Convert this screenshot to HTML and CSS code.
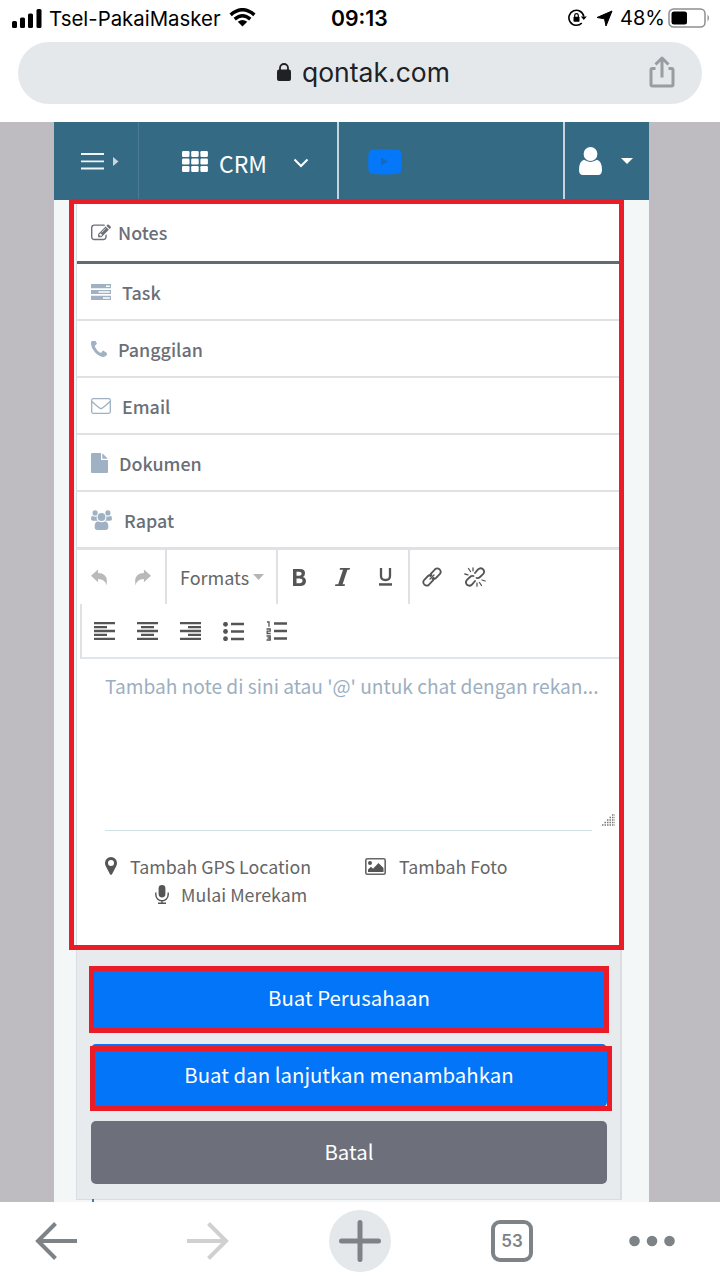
FILE: index.html
```html
<!DOCTYPE html>
<html lang="id">
<head>
<meta charset="utf-8">
<title>Qontak CRM</title>
<link rel="stylesheet" href="styles.css">
</head>
<body>
<div class="screen">
  <header class="browser-top">
    <div class="status">
      <div class="status-left">
        <svg width="30" height="19" viewBox="0 0 30 19"><rect x="0" y="12" width="5" height="7" rx="1.5"/><rect x="8" y="8.500" width="5" height="10.500" rx="1.500"/><rect x="16" y="4.500" width="5" height="14.500" rx="1.500"/><rect x="24.500" y="0" width="5" height="19" rx="1.500"/></svg>
        <span class="carrier">Tsel-PakaiMasker</span>
        <svg class="wifi" width="27" height="19" viewBox="0 0 28 20"><g fill="none" stroke="#000" stroke-width="3.600"><path d="M1.500 7.200Q14-3.600 26.500 7.200"/><path d="M5.800 11.700Q14 4.600 22.200 11.700"/></g><path d="M9 14.500Q14 10.500 19 14.500L14 19.500z"/></svg>
      </div>
      <span class="clock">09:13</span>
      <div class="status-right">
        <svg width="20" height="18" viewBox="0 0 20 18"><path d="M13.800 14A7.500 7.500 0 1 1 15.800 7.500" fill="none" stroke="#000" stroke-width="1.600"/><path d="M12.800 7.500h6L15.800 11z"/><rect x="5.500" y="7.700" width="6" height="5" rx=".7"/><path d="M6.700 8V6.500a1.800 1.800 0 0 1 3.600 0V8" fill="none" stroke="#000" stroke-width="1.200"/></svg>
        <svg class="nav-arrow" width="17" height="17" viewBox="0 0 17 17"><path d="M16 1L10 16 8.500 8.800 1 7.500z" stroke="#000" stroke-linejoin="round"/></svg>
        <span class="percent">48%</span>
        <svg class="battery" width="42" height="20" viewBox="0 0 42 20"><rect x="1" y="1" width="36" height="18" rx="4.500" fill="#fff" stroke="#8f8f8f" stroke-width="1.500"/><rect x="3.500" y="3.500" width="15.500" height="13" rx="2.500"/><path d="M39.500 6.500q3 3.500 0 7z" fill="#8f8f8f"/></svg>
      </div>
    </div>
    <div class="address">
      <svg class="lock" width="14" height="18" viewBox="0 0 14 18"><rect y="6.500" width="14" height="11.500" rx="2" fill="#202124"/><path d="M3 8V5a4 4 0 0 1 8 0v3" fill="none" stroke="#202124" stroke-width="1.800"/></svg>
      <span class="host">qontak.com</span>
      <svg class="share" width="26" height="32" viewBox="0 0 26 32" fill="none" stroke="#999ca0" stroke-width="3" stroke-linejoin="round"><path d="M6.500 12.500H3.500Q2 12.500 2 14v14.500Q2 30 3.500 30h19q1.500 0 1.500-1.500V14q0-1.500-1.500-1.500h-3M13 21.500V3M6.500 8.500L13 2l6.500 6.500"/></svg>
    </div>
  </header>

  <main class="viewport">
    <div class="app">
      <nav class="topbar">
        <div class="top-cell menu">
          <svg width="38" height="18" viewBox="0 0 38 18"><path d="M0 2h23M0 9.300h23M0 16.500h23" stroke="#eef4f7" stroke-width="1.800"/><path d="M32 5l5.500 4.500L32 14z" fill="#c9d6de"/></svg>
        </div>
        <div class="top-cell product">
          <svg width="26" height="21" viewBox="0 0 26 21" fill="#fff"><rect width="7.500" height="6" rx="1.200"/><rect x="9.200" width="7.500" height="6" rx="1.200"/><rect x="18.400" width="7.500" height="6" rx="1.200"/><rect y="7.500" width="7.500" height="6" rx="1.200"/><rect x="9.200" y="7.500" width="7.500" height="6" rx="1.200"/><rect x="18.400" y="7.500" width="7.500" height="6" rx="1.200"/><rect y="15" width="7.500" height="6" rx="1.200"/><rect x="9.200" y="15" width="7.500" height="6" rx="1.200"/><rect x="18.400" y="15" width="7.500" height="6" rx="1.200"/></svg>
          <span class="crm">CRM</span>
          <svg class="chevron" width="16" height="10" viewBox="0 0 16 10"><path d="M1.500 1.500L8 8l6.500-6.500" fill="none" stroke="#fff" stroke-width="2"/></svg>
        </div>
        <div class="top-cell video">
          <svg width="34" height="26" viewBox="0 0 34 26"><path d="M4 .8Q17-.5 30 .8q3 .5 3.400 4 .8 8 0 16-.4 3.400-3.400 4-13 1.200-26 0-3-.6-3.400-4-.8-8 0-16Q1 1.300 4 .8z" fill="#0478f8"/><path d="M13 8.500l7.500 4-7.500 4z" fill="#1769bd"/></svg>
        </div>
        <div class="top-cell user">
          <svg width="23" height="28" viewBox="0 0 23 28" fill="#fff"><circle cx="11.500" cy="7" r="6.900"/><path d="M5 12.800Q11.500 17 18 12.800q5 1.500 5 10.200 0 5-4 5H4q-4 0-4-5 0-8.700 5-10.200z"/></svg>
          <svg class="caret" width="12" height="6" viewBox="0 0 12 6"><path d="M0 0h12L6 6z" fill="#fff"/></svg>
        </div>
      </nav>

      <section class="card">
        <div class="tab active">
          <svg width="20" height="20" viewBox="0 0 1792 1792" fill="#6c707a"><path d="M888 1184l116-116-152-152-116 116v56h96v96h56zm440-720q-16-16-33 1l-350 350q-17 17-1 33t33-1l350-350q17-17 1-33zm80 594v190q0 119-84.500 203.500t-203.500 84.500h-832q-119 0-203.500-84.500t-84.500-203.500v-832q0-119 84.500-203.500t203.500-84.500h832q63 0 117 25 15 7 18 23 3 17-9 29l-49 49q-14 14-32 8-23-6-45-6h-832q-66 0-113 47t-47 113v832q0 66 47 113t113 47h832q66 0 113-47t47-113v-126q0-13 9-22l64-64q15-15 35-7t20 29zm-96-738l288 288-672 672h-288v-288zm444 132l-92 92-288-288 92-92q28-28 68-28t68 28l152 152q28 28 28 68t-28 68z"/></svg>
          <span>Notes</span>
        </div>
        <div class="tab">
          <svg width="20" height="16" viewBox="0 0 20 16"><path d="M0 0h20v4.200H0zM0 5.900h20v4.200H0zM0 11.800h20V16H0z" fill="#9fb1c2"/><path d="M15 1.400h3.800v1.500H15zM7.500 7.300h11.300v1.500H7.500zM12 13.200h6.800v1.500H12z" fill="#fff"/></svg>
          <span>Task</span>
        </div>
        <div class="tab">
          <svg width="16" height="16" viewBox="192 256 1408 1280" preserveAspectRatio="none" fill="#9fb1c2"><path d="M1600 1240q0 27-10 70.500t-21 68.500q-21 50-122 106-94 51-186 51-27 0-53-3.500t-57.500-12.500-47-14.500-55.500-20.500-49-18q-98-35-175-83-127-79-264-216t-216-264q-48-77-83-175-3-9-18-49t-20.500-55.500-14.500-47-12.500-57.500-3.500-53q0-92 51-186 56-101 106-122 25-11 68.500-21t70.500-10q14 0 21 3 18 6 53 76 11 19 30 54t35 63.500 31 53.500q3 4 17.500 25t21.500 35.500 7 28.500q0 20-28.500 50t-62 55-62 53-28.500 46q0 9 5 22.500t8.500 20.500 14 24 11.500 19q76 137 174 235t235 174q2 1 19 11.500t24 14 20.500 8.500 22.500 5q18 0 46-28.500t53-62 55-62 50-28.500q14 0 28.500 7t35.500 21.500 25 17.500q25 15 53.500 31t63.500 35 54 30q70 35 76 53 3 7 3 21z"/></svg>
          <span>Panggilan</span>
        </div>
        <div class="tab">
          <svg width="20" height="16" viewBox="0 0 20 16" fill="none" stroke="#9fb1c2" stroke-width="1.300"><rect x=".7" y=".7" width="18.600" height="14.600" rx="1.500"/><path d="M.9 3.500q4 3.700 7.300 6.300 1.800 1.400 3.600 0 3.300-2.600 7.300-6.300"/></svg>
          <span>Email</span>
        </div>
        <div class="tab">
          <svg width="17" height="20" viewBox="0 0 17 20" fill="#9fb1c2"><path d="M1 0h9v7h7v12q0 1-1 1H1q-1 0-1-1V1q0-1 1-1z"/><path d="M11.300.2l5.500 5.500h-5.500z"/></svg>
          <span>Dokumen</span>
        </div>
        <div class="tab last">
          <svg width="21" height="20" viewBox="0 0 22 20" preserveAspectRatio="none" fill="#9fb1c2"><circle cx="4.300" cy="2.900" r="2.700"/><circle cx="17.700" cy="2.900" r="2.700"/><path d="M1.500 5.800q2.500 1.500 4.500.4-.6 2.600 1 4.600H2q-2 0-2-1.700 0-3 1.500-3.300zM20.500 5.800q-2.500 1.500-4.500.4.600 2.600-1 4.600h5q2 0 2-1.700 0-3-1.500-3.300z"/><circle cx="11" cy="7" r="4.900" fill="#fff"/><circle cx="11" cy="7" r="4.100"/><path d="M7 11.200q4 2 8 0 3.200.8 3.200 5.600 0 3.200-3 3.200H6.800q-3 0-3-3.200 0-4.800 3.200-5.600z"/></svg>
          <span>Rapat</span>
        </div>

        <div class="tools">
          <div class="tool-group history">
            <svg width="17" height="17" viewBox="0 0 18 17"><path d="M0 6.700L7.500 0v3.800Q19 4 16.300 17 15.200 10 7.500 10v3.500z" fill="#b9b9b9"/></svg>
            <svg width="17" height="17" viewBox="0 0 18 17"><path d="M18 6.700L10.500 0v3.800Q-1 4 1.700 17 2.800 10 10.500 10v3.500z" fill="#b9b9b9"/></svg>
          </div>
          <div class="tool-group formats"><span>Formats</span><svg width="11" height="6" viewBox="0 0 11 6"><path d="M0 0h11L5.500 6z" fill="#b5b5b5"/></svg></div>
          <div class="tool-group inline">
            <svg width="13" height="17" viewBox="0 0 13 17"><path fill-rule="evenodd" d="M0 0h7q5 0 5 4.200 0 2.800-2.200 3.700Q13 8.800 13 12q0 5-6 5H0zM3.500 2.800v4H6q2.700 0 2.700-2T6 2.800zM3.500 9.400v4.800h3q3 0 3-2.400t-3-2.400z" fill="#555"/></svg>
            <svg width="15" height="18" viewBox="0 0 15 18"><path d="M5 0h10l-.4 1.700h-2.200L7.600 16.300h2.400L9.600 18H0l.4-1.700h2.800L8 1.700H4.600z" fill="#555"/></svg>
            <svg width="13" height="18" viewBox="0 0 13 18"><path d="M2 0v8q0 4 4.500 4T11 8V0" fill="none" stroke="#555" stroke-width="2.300"/><path d="M0 15.200h13v2.500H0z" fill="#555"/></svg>
          </div>
          <div class="tool-group links">
            <svg width="20" height="20" viewBox="0 0 20 20" fill="none" stroke="#555" stroke-width="1.800" stroke-linecap="round"><path d="M8.500 9.200Q8 7.500 9.500 6L13 2.300q2.300-2 4.700.2 2.100 2.400 0 4.700L14 11q-1.800 1.500-3.500.8M11.500 10.800q.5 1.700-1 3.200L7 17.700q-2.300 2-4.700-.2-2.100-2.400 0-4.700L6 9q1.800-1.500 3.500-.8"/><path d="M8 12l4-4" stroke-width="1.200"/></svg>
            <svg width="22" height="20" viewBox="0 0 22 20" fill="none" stroke="#555" stroke-width="1.800" stroke-linecap="round"><path d="M11 6l3-3.500q2.500-2.300 5-.3 2.200 2.500 0 5L16 10q-1.500 1.500-3.500 1M11 14l-3 3.500q-2.500 2.300-5 .3-2.200-2.500 0-5L6 10Q7.500 8.500 9.500 9"/><path stroke-width="1.300" d="M4.500 1.500l2 3M9 .8v3M.8 7l3.200.8M17.500 18.500l-2-3M13 19.200v-3M21.200 14l-3.200-1"/></svg>
          </div>
        </div>
        <div class="tools second">
          <svg width="21" height="18" viewBox="0 0 21 18" stroke="#555" stroke-width="2.300"><path d="M0 1.200h21M0 5.100h13M0 9h21M0 12.900h13M0 16.800h21"/></svg>
          <svg width="21" height="18" viewBox="0 0 21 18" stroke="#555" stroke-width="2.300"><path d="M0 1.200h21M4 5.100h13M0 9h21M4 12.900h13M0 16.800h21"/></svg>
          <svg width="21" height="18" viewBox="0 0 21 18" stroke="#555" stroke-width="2.300"><path d="M0 1.200h21M8 5.100h13M0 9h21M8 12.900h13M0 16.800h21"/></svg>
          <svg width="21" height="19" viewBox="0 0 21 19"><path d="M8 2h13M8 9.500h13M8 17h13" stroke="#555" stroke-width="2.300"/><g fill="#555"><circle cx="2.500" cy="2.300" r="2.400"/><circle cx="2.500" cy="9.500" r="2.400"/><circle cx="2.500" cy="16.700" r="2.400"/></g></svg>
          <svg width="21" height="20" viewBox="0 0 21 20" fill="none" stroke="#555"><path d="M8 2.500h13M8 10h13M8 17.500h13" stroke-width="2.300"/><path d="M1 1h2v4.800M.5 8h3.700v2.200H1.200v2.300h3.500M.5 15h3.700v4H.5M1.500 17h2.500" stroke-width="1.300"/></svg>
        </div>

        <div class="editor">
          <div class="note-area"><span class="placeholder">Tambah note di sini atau '@' untuk chat dengan rekan...</span></div>
          <svg class="grip" width="13" height="13" viewBox="0 0 13 13" stroke="#777" stroke-width="1.400" stroke-dasharray="1.500 1"><path d="M0 12h13M2.500 9.500H13M5 7h8M7.500 4.500H13M10 2h3"/></svg>
          <div class="actions">
            <div class="action-row">
              <svg width="12" height="18" viewBox="0 0 12 18"><path fill-rule="evenodd" d="M6 0a6 6 0 0 1 6 6q0 1.500-.7 3L7 17.200q-1 1.300-2 0L.7 9Q0 7.500 0 6a6 6 0 0 1 6-6zm0 3a3 3 0 1 0 0 6 3 3 0 0 0 0-6z" fill="#555"/></svg>
              <span class="gps">Tambah GPS Location</span>
              <svg class="photo" width="21" height="17" viewBox="0 0 21 17"><rect x=".8" y=".8" width="19.400" height="15.400" rx="1.500" fill="none" stroke="#666" stroke-width="1.600"/><circle cx="5" cy="5" r="2" fill="#555"/><path d="M3 14v-2.500L6 8.800l2 2L13.500 5l5 5v4z" fill="#555"/></svg>
              <span class="foto">Tambah Foto</span>
            </div>
            <div class="action-row record">
              <svg width="14" height="19" viewBox="0 0 14 19"><rect x="3.600" width="6.800" height="12.500" rx="3.400" fill="#555"/><path d="M.8 7.500v2a6.200 6.200 0 0 0 12.400 0v-2M7 15.500v3M3 18.300h8" fill="none" stroke="#555" stroke-width="1.400"/></svg>
              <span class="rec">Mulai Merekam</span>
            </div>
          </div>
        </div>

        <div class="footer">
          <div class="btn primary"><span>Buat Perusahaan</span></div>
          <div class="btn primary"><span>Buat dan lanjutkan menambahkan</span></div>
          <div class="btn cancel"><span>Batal</span></div>
        </div>
      </section>
      <i class="next-line"></i>
      <div class="mark mark-card"></div>
      <div class="mark mark-create"></div>
      <div class="mark mark-more"></div>
    </div>
  </main>

  <footer class="browser-bottom">
    <svg width="42" height="38" viewBox="0 0 42 38" fill="none" stroke="#7e8387" stroke-width="4"><path d="M42 19H3M20.500 1.500L3 19l17.500 17.500"/></svg>
    <svg class="forward" width="42" height="38" viewBox="0 0 42 38" fill="none" stroke="#d0d0d0" stroke-width="4"><path d="M0 19h39M21.500 1.500L39 19 21.500 36.500"/></svg>
    <div class="plus"><svg width="42" height="42" viewBox="0 0 42 42" stroke="#7e8387" stroke-width="5" stroke-linecap="round"><path d="M21 2.500v37M2.500 21h37"/></svg></div>
    <div class="tabs-count">53</div>
    <svg class="more" width="46" height="12" viewBox="0 0 46 12" fill="#7e8387"><circle cx="5.500" cy="6" r="5.300"/><circle cx="23" cy="6" r="5.300"/><circle cx="40.500" cy="6" r="5.300"/></svg>
  </footer>
</div>
</body>
</html>
```
FILE: styles.css
```css
* { box-sizing: border-box; }
body { margin: 0; background: #fff; font-family: "Noto Sans CJK SC", "Noto Sans", sans-serif; }
svg { display: block; flex: none; }
span { white-space: nowrap; }
.screen { width: 720px; height: 1280px; display: flex; flex-direction: column; overflow: hidden; }

/* Browser chrome */
.browser-top { height: 122px; font-family: Inter, sans-serif; }
.status { height: 42px; padding: 0 9px 6px 12px; display: grid; grid-template-columns: 319px auto 1fr; align-items: center; color: #000; }
.status-left, .status-right { display: flex; align-items: center; }
.status-right { justify-content: flex-end; }
.carrier { margin: 0 8px 0 7px; font-size: 20.400px; }
.wifi { margin-top: -2px; }
.clock { font-size: 21.200px; font-weight: 600; }
.nav-arrow { margin: 0 7px 0 8px; }
.percent { font-size: 20px; }
.battery { margin: -1px 1px 0 3px; }
.address { margin: 0 18px; height: 62px; border-radius: 31px; background: #e5e8eb; display: flex; align-items: center; padding: 0 27px 2px 259px; color: #202124; }
.host { margin-left: 11px; font-size: 26.500px; line-height: 60px; }
.share { margin-left: auto; }
.browser-bottom { height: 78px; padding: 0 44px 0 35px; display: flex; align-items: center; background: #fff; }
.forward { margin-left: 110px; }
.plus { margin-left: 100px; width: 62px; height: 62px; border-radius: 50%; background: #e5e8eb; display: grid; place-items: center; }
.tabs-count { margin-left: 100px; width: 42px; height: 42px; border: 4px solid #7e8387; border-radius: 9px; display: grid; place-items: center; font: 600 17px Inter, sans-serif; color: #7e8387; }
.more { margin-left: 96px; }

/* Application shell */
.viewport { height: 1080px; padding: 0 71px 0 54px; background: #bfbcc1; overflow: hidden; }
.app { position: relative; height: 1080px; background: #f3f7f8; }
.topbar { height: 78px; display: grid; grid-template-columns: 85px 200px 226px 84px; background: #356a85; }
.top-cell { display: flex; align-items: center; border-right: 2px solid #c5d5df; padding-bottom: 1px; }
.menu { border-right: 1px solid #4c7b93; padding: 0 0 2px 27px; }
.product { padding-left: 43px; gap: 11px; }
.product > svg:first-child { margin-bottom: 0; }
.crm { width: 63px; font-size: 23px; line-height: 75px; color: #fff; padding-top: 4px; }
.chevron { margin-top: 3px; }
.video { padding: 0 0 1px 29px; }
.user { padding: 0 0 2px 14px; gap: 19px; border: 0; }

/* Activity card */
.card { margin: 2px 27px 0 22px; border: 2px solid #d9dde1; border-width: 0 2px 2px 1px; background: #fff; height: 998px; }
.tab { height: 57px; padding: 1px 0 0 14px; border-bottom: 2px solid #dfe1e4; display: flex; align-items: center; color: #6b6f77; font-size: 17.900px; font-weight: 500; gap: 11px; line-height: 26px; }
.tab span { padding-bottom: 1px; }
.tab.active { height: 62px; border-bottom: 3px solid #5f6b72; padding-top: 2px; gap: 7px; }
.tab.last { height: 58px; border-bottom-width: 3px; gap: 12px; }
.tools { height: 54px; display: flex; }
.tool-group { display: flex; align-items: center; border-right: 2px solid #dfe1e3; }
.history { width: 90px; padding-left: 14px; gap: 26px; }
.formats { width: 111px; padding-left: 13px; gap: 4px; font-size: 18px; color: #666; }
.inline { width: 132px; padding-left: 15px; gap: 29px; }
.links { border: 0; padding-left: 12px; gap: 22px; }
.tools.second { height: 55px; border-bottom: 2px solid #dfe5e8; border-left: 2px solid #dfe1e3; margin-left: 3px; padding: 1px 0 0 12px; align-items: center; gap: 22px; }
.editor { position: relative; height: 290px; }
.note-area { height: 172px; margin: 0 28px; border-bottom: 1px solid #cfe0e6; padding-top: 13px; }
.placeholder { display: block; font-size: 19.150px; line-height: 28px; color: #9cafc0; }
.grip { position: absolute; right: 5px; top: 154px; }
.actions { padding: 21px 0 0 28px; color: #666; font-size: 17.800px; }
.action-row { height: 28px; display: flex; align-items: center; padding-bottom: 1px; }
.action-row svg { margin-top: 1px; }
.gps { margin-left: 13px; }
.photo { margin-left: 54px; }
.foto { margin-left: 13px; }
.record { padding-left: 50px; }
.rec { margin-left: 12px; }
.footer { height: 250px; padding: 18px 13px 0 14px; background: #e7ebee; display: flex; flex-direction: column; gap: 14px; }
.btn { height: 63px; border-radius: 5px; display: grid; place-items: center; font-size: 20.400px; line-height: 24px; color: #fff; padding-bottom: 4px; }
.primary { background: #0275f8; }
.cancel { background: #6d707b; }
.next-line { position: absolute; left: 38px; bottom: 0; width: 2px; height: 3px; background: #407bb5; }

/* Highlight frames */
.mark { position: absolute; border: 5px solid #ea1c27; }
.mark-card { left: 15px; top: 77px; width: 555px; height: 751px; }
.mark-create { left: 35px; top: 844px; width: 520px; height: 67px; }
.mark-more { left: 36px; top: 924px; width: 522px; height: 65px; }
```
